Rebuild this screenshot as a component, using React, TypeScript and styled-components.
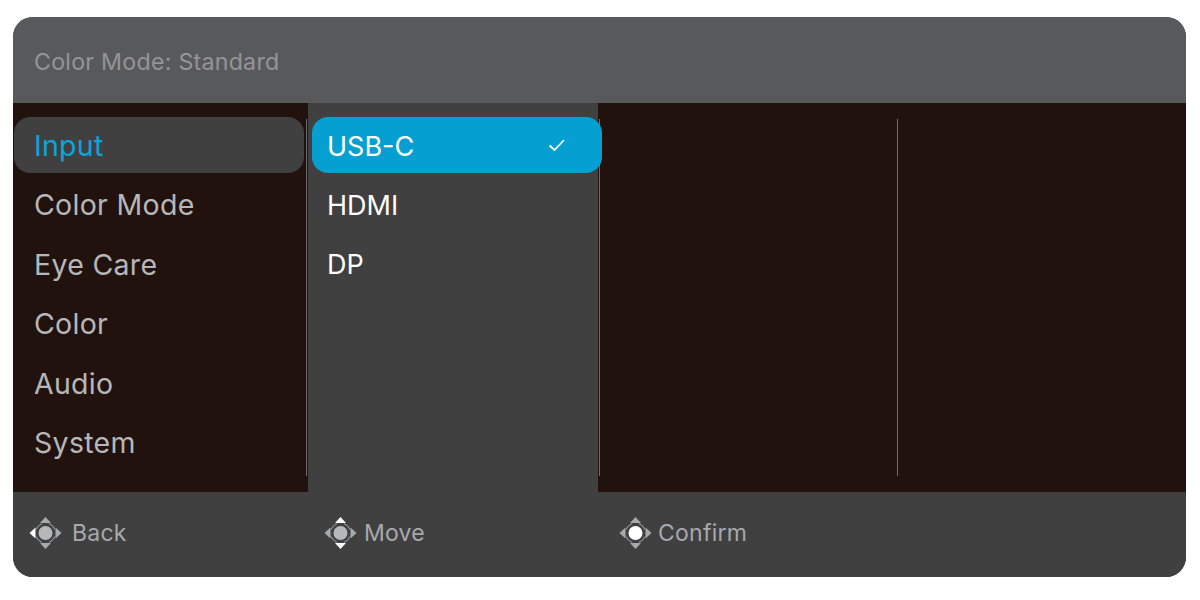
import React from 'react';
import styled, { createGlobalStyle } from 'styled-components';

const GlobalStyle = createGlobalStyle`
  html, body {
    margin: 0;
    background: #ffffff;
  }
  body {
    font-family: "Inter", "Liberation Sans", sans-serif;
  }
`;

const Page = styled.div`
  width: 1200px;
  height: 600px;
  padding: 17px 14px 23px 13px;
  box-sizing: border-box;
`;

const Frame = styled.div`
  height: 560px;
  display: grid;
  grid-template-rows: 86px 389px 85px;
  border-radius: 20px;
  overflow: hidden;
  background: #404041;
`;

const Header = styled.div`
  display: flex;
  align-items: center;
  padding: 4px 0 0 21px;
  background: #58595b;
  color: #939598;
  font-size: 23.2px;
  letter-spacing: 0.25px;
`;

const Body = styled.div`
  display: grid;
  grid-template-columns: 295px 290px 1fr;
  background: #22120e;
`;

const Column = styled.div`
  padding-top: 14px;
  padding-bottom: 16px;
`;

// the divider starts a little below the top of the pills
const Rule = styled.div`
  height: 100%;
  box-sizing: border-box;
  background: linear-gradient(#6d6e71, #6d6e71) no-repeat right 0 top 2px / 1px 100%;
`;

const SideColumn = styled(Column)`
  ${Rule} {
    padding-left: 1px;
    padding-right: 3px;
    margin-right: 1px;
  }
`;

const MiddleColumn = styled(Column)`
  background: #404041;
  ${Rule} {
    padding-left: 4px;
    margin-right: -2px;
  }
`;

const RightColumn = styled(Column)`
  display: grid;
  grid-template-columns: 300px 1fr;
`;

const MenuItem = styled.div<{ $active?: boolean }>`
  height: 56px;
  box-sizing: border-box;
  margin-bottom: 3.4px;
  padding: 1px 0 0 20px;
  display: flex;
  align-items: center;
  border-radius: 16px;
  background: ${props => (props.$active ? '#404041' : 'transparent')};
  color: ${props => (props.$active ? '#0ba5d8' : '#b5b7b9')};
  font-size: 28.5px;
  letter-spacing: 0.3px;
`;

const OptionItem = styled.div<{ $selected?: boolean }>`
  position: relative;
  height: 56px;
  box-sizing: border-box;
  margin-bottom: 3.4px;
  margin-right: ${props => (props.$selected ? '-2px' : '0')};
  padding: 2px 0 0 15px;
  display: flex;
  align-items: center;
  border-radius: 16px;
  background: ${props => (props.$selected ? '#05a0d1' : 'transparent')};
  color: #ffffff;
  font-size: 27px;
`;

const CheckMark = styled.svg`
  position: absolute;
  left: 236px;
  top: 21px;
  width: 18px;
  height: 14px;
  fill: none;
  stroke: #ffffff;
  stroke-width: 1.8;
`;

const Footer = styled.div`
  display: grid;
  grid-template-columns: 295px 295px 1fr;
  background: #404041;
`;

const Hint = styled.div<{ $gap: number }>`
  display: flex;
  align-items: center;
  gap: ${props => props.$gap}px;
  padding: 0 0 3px 16px;
  color: #a7a9ac;
  font-size: 23px;
  letter-spacing: 0.25px;
`;

const PadSvg = styled.svg`
  width: 33px;
  height: 34px;
  flex: none;
`;

const PAD_DIM = '#a7a9ac';
const PAD_LIT = '#ffffff';

type PadLit = 'left' | 'vertical' | 'center';

const DirectionPad: React.FC<{ lit: PadLit }> = ({ lit }) => {
  const vertical = lit === 'vertical' ? PAD_LIT : PAD_DIM;
  return (
    <PadSvg viewBox="0 0 33 34">
      <circle cx="16.5" cy="17" r="7" fill={lit === 'center' ? PAD_LIT : '#b5b7b9'} />
      <path
        d="M19.9 7.6 A10 10 0 0 1 25.9 13.6 M25.9 20.4 A10 10 0 0 1 19.9 26.4 M13.1 26.4 A10 10 0 0 1 7.1 20.4 M7.1 13.6 A10 10 0 0 1 13.1 7.6"
        fill="none"
        stroke={PAD_DIM}
        strokeWidth="1"
      />
      <path d="M16.5 1 L22 7 H11 Z" fill={vertical} />
      <path d="M16.5 33 L22 27 H11 Z" fill={vertical} />
      <path d="M0.5 17 L6.5 11.5 V22.5 Z" fill={lit === 'left' ? PAD_LIT : PAD_DIM} />
      <path d="M32.5 17 L26.5 11.5 V22.5 Z" fill={PAD_DIM} />
    </PadSvg>
  );
};

const menu = ['Input', 'Color Mode', 'Eye Care', 'Color', 'Audio', 'System'];
const options = ['USB-C', 'HDMI', 'DP'];
const hints: { label: string; gap: number; lit: PadLit }[] = [
  { label: 'Back', gap: 10, lit: 'left' },
  { label: 'Move', gap: 7, lit: 'vertical' },
  { label: 'Confirm', gap: 6, lit: 'center' },
];

export default function App() {
  return (
    <Page>
      <GlobalStyle />
      <Frame>
        <Header>Color Mode: Standard</Header>
        <Body>
          <SideColumn>
            <Rule>
              {menu.map((item, i) => (
                <MenuItem key={item} $active={i === 0}>
                  {item}
                </MenuItem>
              ))}
            </Rule>
          </SideColumn>
          <MiddleColumn>
            <Rule>
              {options.map((item, i) => (
                <OptionItem key={item} $selected={i === 0}>
                  {item}
                  {i === 0 && (
                    <CheckMark viewBox="0 0 18 14">
                      <path d="M1.5 7.5 L6.5 12 L16 2" />
                    </CheckMark>
                  )}
                </OptionItem>
              ))}
            </Rule>
          </MiddleColumn>
          <RightColumn>
            <Rule />
          </RightColumn>
        </Body>
        <Footer>
          {hints.map(hint => (
            <Hint key={hint.label} $gap={hint.gap}>
              <DirectionPad lit={hint.lit} />
              {hint.label}
            </Hint>
          ))}
        </Footer>
      </Frame>
    </Page>
  );
}
